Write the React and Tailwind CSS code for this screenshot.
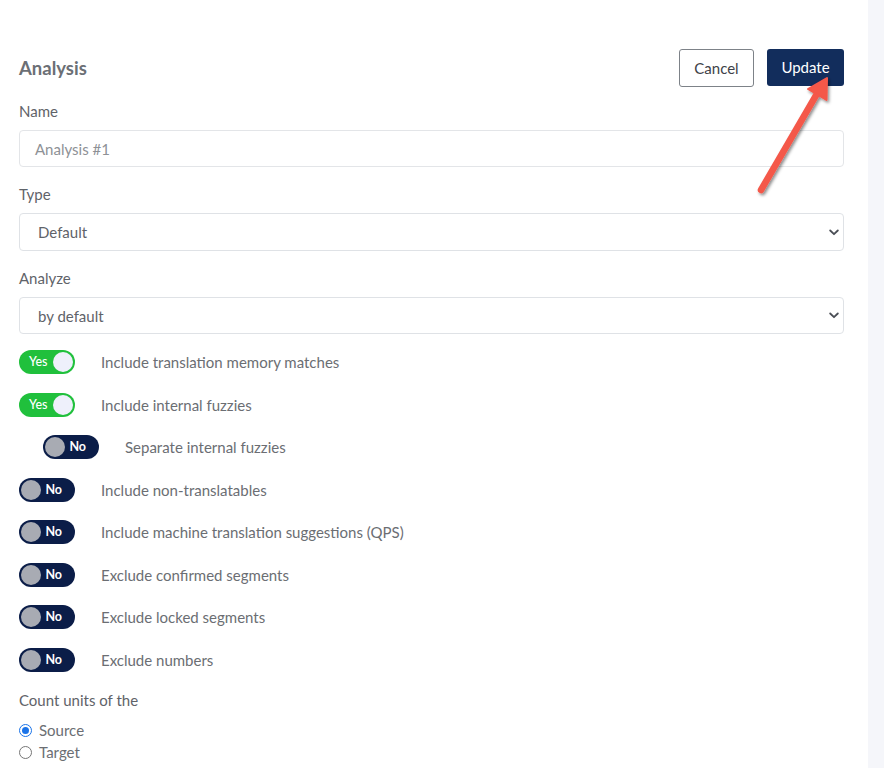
import React from "react";

const font = { fontFamily: "Lato, 'Noto Sans', sans-serif" };

function Toggle({ on }) {
  return on ? (
    <div className="flex h-[24px] w-[56px] shrink-0 items-center justify-between rounded-full bg-[#20c03c] pl-[10px] pr-[2px]">
      <span className="text-[12.5px] font-medium leading-none text-white">Yes</span>
      <span className="h-[20px] w-[20px] rounded-full bg-[#eef0fb]" />
    </div>
  ) : (
    <div className="flex h-[24px] w-[56px] shrink-0 items-center justify-between rounded-full bg-[#0b1d48] pl-[2px] pr-[13px]">
      <span className="h-[20px] w-[20px] rounded-full bg-[#a8abb3]" />
      <span className="text-[12.5px] font-bold leading-none text-white">No</span>
    </div>
  );
}

function ToggleRow({ on, label, indent }) {
  return (
    <div className={"flex h-[42.5px] items-center gap-[26px] " + (indent ? "pl-[24px]" : "")}>
      <Toggle on={on} />
      <span className="text-[15px] leading-[20px] text-[#6b6e73]">{label}</span>
    </div>
  );
}

function Chevron() {
  return (
    <svg width="10" height="7" viewBox="0 0 10 7" className="text-[#4b4f56]">
      <path d="M1.2 1.5 L5 5.2 L8.8 1.5" fill="none" stroke="currentColor" strokeWidth="1.8" strokeLinecap="round" strokeLinejoin="round" />
    </svg>
  );
}

function Select({ value, h }) {
  return (
    <div className={"flex items-center justify-between rounded-[4px] border border-[#dfe2e6] pl-[18px] pr-[4px] " + h}>
      <span className="text-[15px] leading-[20px] text-[#5f6369]">{value}</span>
      <Chevron />
    </div>
  );
}

export default function App() {
  const rows = [
    { on: true, label: "Include translation memory matches" },
    { on: true, label: "Include internal fuzzies" },
    { on: false, label: "Separate internal fuzzies", indent: true },
    { on: false, label: "Include non-translatables" },
    { on: false, label: "Include machine translation suggestions (QPS)" },
    { on: false, label: "Exclude confirmed segments" },
    { on: false, label: "Exclude locked segments" },
    { on: false, label: "Exclude numbers" },
  ];
  return (
    <div className="relative flex h-[768px] w-[884px] overflow-hidden bg-white" style={font}>
      <div className="w-[868px] shrink-0 bg-white pl-[19px] pr-[24px] pt-[49px]">
        <div className="flex h-[38px] items-center justify-between">
          <h1 className="text-[18.5px] font-bold leading-[24px] text-[#6b6f75]">Analysis</h1>
          <div className="flex gap-[13px]">
            <button className="h-[38px] w-[75px] rounded-[3px] border border-[#7d8288] bg-white text-[15px] leading-[20px] text-[#3e4248]">Cancel</button>
            <button className="h-[37px] w-[77px] rounded-[3px] bg-[#122d5c] pb-[2px] text-[15px] leading-[20px] text-white">Update</button>
          </div>
        </div>

        <div className="mt-[14px] text-[15px] leading-[20px] text-[#5f6369]">Name</div>
        <div className="mt-[9px] flex h-[37px] items-center rounded-[4px] border border-[#e3e5e8] pl-[15px] text-[15px] leading-[20px] text-[#8e9196]">
          Analysis #1
        </div>

        <div className="mt-[17px] text-[15px] leading-[20px] text-[#5f6369]">Type</div>
        <div className="mt-[9px]"><Select value="Default" h="h-[38px]" /></div>

        <div className="mt-[17px] text-[15px] leading-[20px] text-[#5f6369]">Analyze</div>
        <div className="mt-[9px]"><Select value="by default" h="h-[37px]" /></div>

        <div className="mt-[7px] flex flex-col">
          {rows.map((r, i) => (
            <ToggleRow key={i} {...r} />
          ))}
        </div>

        <div className="mt-[9px] text-[15px] leading-[20px] text-[#5f6369]">Count units of the</div>
        <div className="mt-[10px] flex flex-col gap-[2px] text-[15px] leading-[20px] text-[#6b6e73]">
          <label className="flex items-center gap-[7px]">
            <span className="flex h-[13px] w-[13px] items-center justify-center rounded-full border border-[#1a73e8]">
              <span className="h-[7px] w-[7px] rounded-full bg-[#1a73e8]" />
            </span>
            Source
          </label>
          <label className="flex items-center gap-[7px]">
            <span className="h-[13px] w-[13px] rounded-full border border-[#767676]" />
            Target
          </label>
        </div>
      </div>
      <div className="flex-1 bg-[#f5f6fa]" />

      <svg className="absolute left-[740px] top-[68px]" width="110" height="140" viewBox="740 68 110 140">
        <defs>
          <filter id="sh" x="-50%" y="-50%" width="200%" height="200%">
            <feDropShadow dx="1.5" dy="2" stdDeviation="1.5" floodColor="#000" floodOpacity="0.45" />
          </filter>
        </defs>
        <g filter="url(#sh)">
          <line x1="761" y1="190" x2="818" y2="92" stroke="#f4584a" strokeWidth="6.5" strokeLinecap="round" />
          <path d="M827 78 L826.5 100 L808 89 Z" fill="#f4584a" stroke="#f4584a" strokeWidth="2" strokeLinejoin="round" />
        </g>
      </svg>
    </div>
  );
}
